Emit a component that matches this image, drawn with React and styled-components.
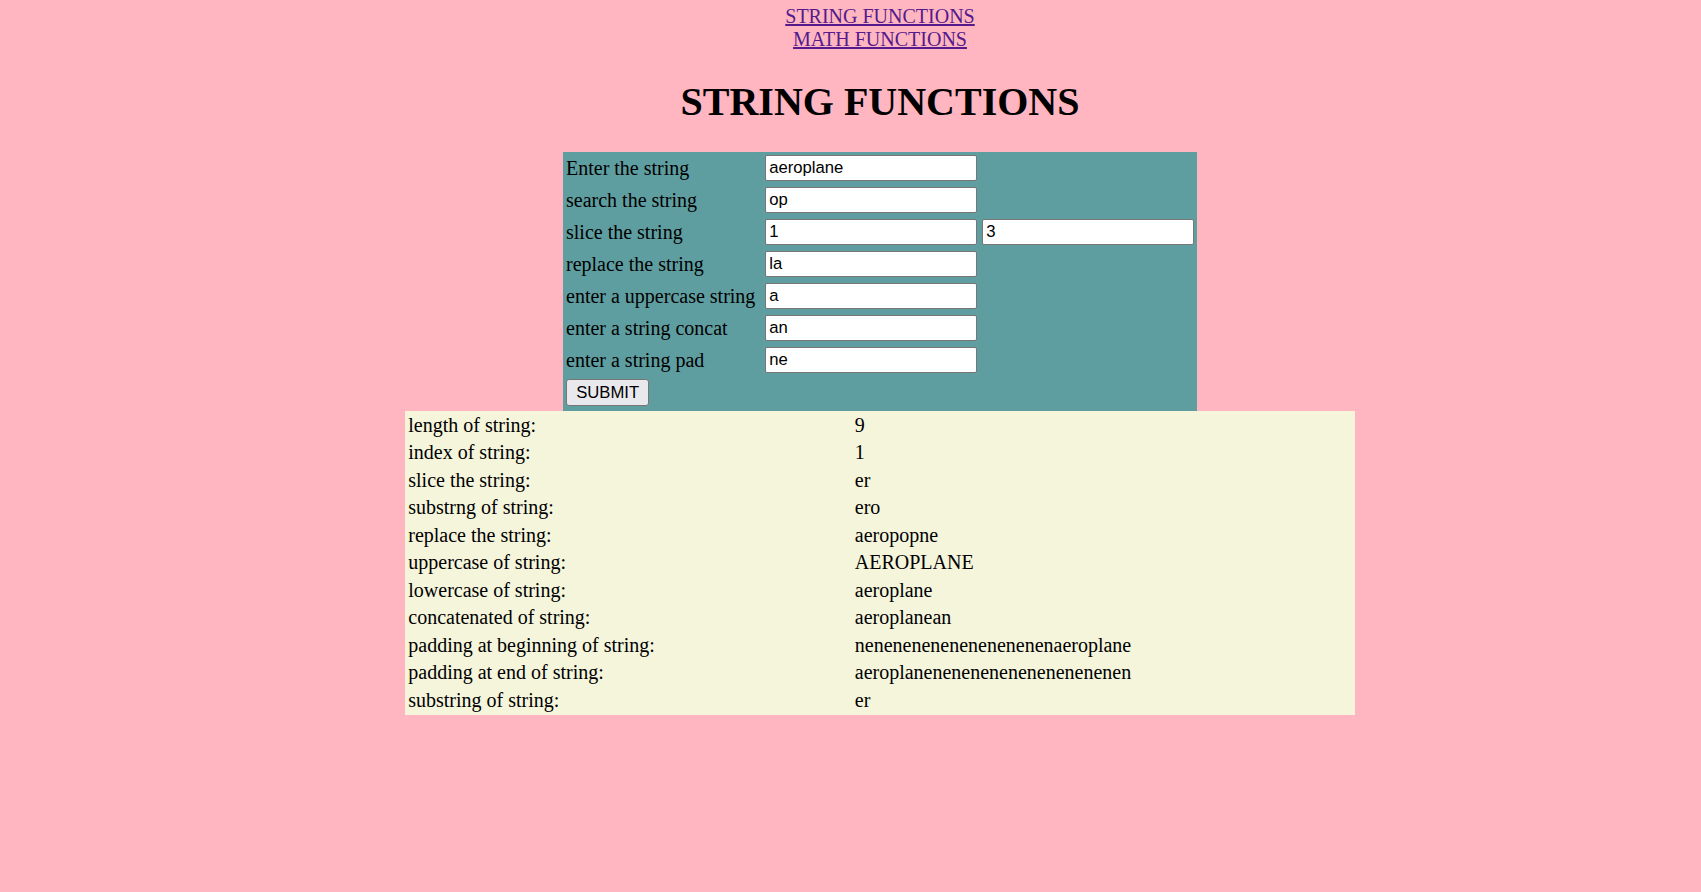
import styled, { createGlobalStyle } from 'styled-components';

const GlobalStyle = createGlobalStyle`
  html, body {
    margin: 0;
    background: #ffb6c1;
  }
  body {
    font-family: "Liberation Serif", "Times New Roman", serif;
    font-size: 20px;
    color: #000;
  }
`;

const Page = styled.div`
  box-sizing: border-box;
  min-height: 100vh;
  padding: 5px 10px 0 69px;
  display: flex;
  flex-direction: column;
  align-items: center;
`;

const Nav = styled.nav`
  display: flex;
  flex-direction: column;
  align-items: center;
`;

const NavLink = styled.a`
  color: #551a8b;
  text-decoration: underline;
`;

const Title = styled.h1`
  font-size: 40px;
  font-weight: bold;
  margin: 26.8px 0 27.2px;
`;

const Form = styled.form`
  display: flex;
  flex-direction: column;
  align-items: center;
`;

const FormTable = styled.table`
  background: #5f9ea0;
  border-spacing: 2.5px;
`;

const Cell = styled.td`
  padding: 1.25px 1.25px 2.75px;
  vertical-align: middle;
  white-space: nowrap;
  min-width: ${(p) => (p.$label ? '194px' : '0')};
`;

const Input = styled.input`
  display: block;
  box-sizing: border-box;
  width: 212.5px;
  height: 26px;
  margin: 0;
  padding: 1.25px 3.75px;
  border: 1.25px solid #767676;
  border-radius: 2px;
  background: #fff;
  color: #000;
  font-family: "Liberation Sans", Arial, sans-serif;
  font-size: 16.67px;
`;

const Button = styled.button`
  display: block;
  margin: 0;
  padding: 1.25px 9.2px;
  height: 26.6px;
  border: 1.25px solid #767676;
  border-radius: 3px;
  background: #e9e9ed;
  color: #000;
  font-family: "Liberation Sans", Arial, sans-serif;
  font-size: 16.67px;
`;

const ResultTable = styled.table`
  width: 950px;
  background: #f5f5dc;
  border-spacing: 2.5px;
`;

const ResultCell = styled.td`
  padding: 1.25px;
  width: ${(p) => (p.$label ? '442px' : 'auto')};
`;

const fields = [
  { label: 'Enter the string', values: ['aeroplane'] },
  { label: 'search the string', values: ['op'] },
  { label: 'slice the string', values: ['1', '3'] },
  { label: 'replace the string', values: ['la'] },
  { label: 'enter a uppercase string', values: ['a'] },
  { label: 'enter a string concat', values: ['an'] },
  { label: 'enter a string pad', values: ['ne'] },
];

const results = [
  ['length of string:', '9'],
  ['index of string:', '1'],
  ['slice the string:', 'er'],
  ['substrng of string:', 'ero'],
  ['replace the string:', 'aeropopne'],
  ['uppercase of string:', 'AEROPLANE'],
  ['lowercase of string:', 'aeroplane'],
  ['concatenated of string:', 'aeroplanean'],
  ['padding at beginning of string:', 'nenenenenenenenenenenaeroplane'],
  ['padding at end of string:', 'aeroplanenenenenenenenenenenen'],
  ['substring of string:', 'er'],
];

function App() {
  return (
    <Page>
      <GlobalStyle />
      <Nav>
        <NavLink href="#string">STRING FUNCTIONS</NavLink>
        <NavLink href="#math">MATH FUNCTIONS</NavLink>
      </Nav>
      <Title>STRING FUNCTIONS</Title>
      <Form onSubmit={(e) => e.preventDefault()}>
        <FormTable>
          <tbody>
            {fields.map((f) => (
              <tr key={f.label}>
                <Cell $label>{f.label}</Cell>
                <Cell>
                  <Input defaultValue={f.values[0]} />
                </Cell>
                <Cell>{f.values[1] && <Input defaultValue={f.values[1]} />}</Cell>
              </tr>
            ))}
            <tr>
              <Cell>
                <Button type="submit">SUBMIT</Button>
              </Cell>
            </tr>
          </tbody>
        </FormTable>
        <ResultTable>
          <tbody>
            {results.map(([label, value]) => (
              <tr key={label}>
                <ResultCell $label>{label}</ResultCell>
                <ResultCell>{value}</ResultCell>
              </tr>
            ))}
          </tbody>
        </ResultTable>
      </Form>
    </Page>
  );
}

export default App;
